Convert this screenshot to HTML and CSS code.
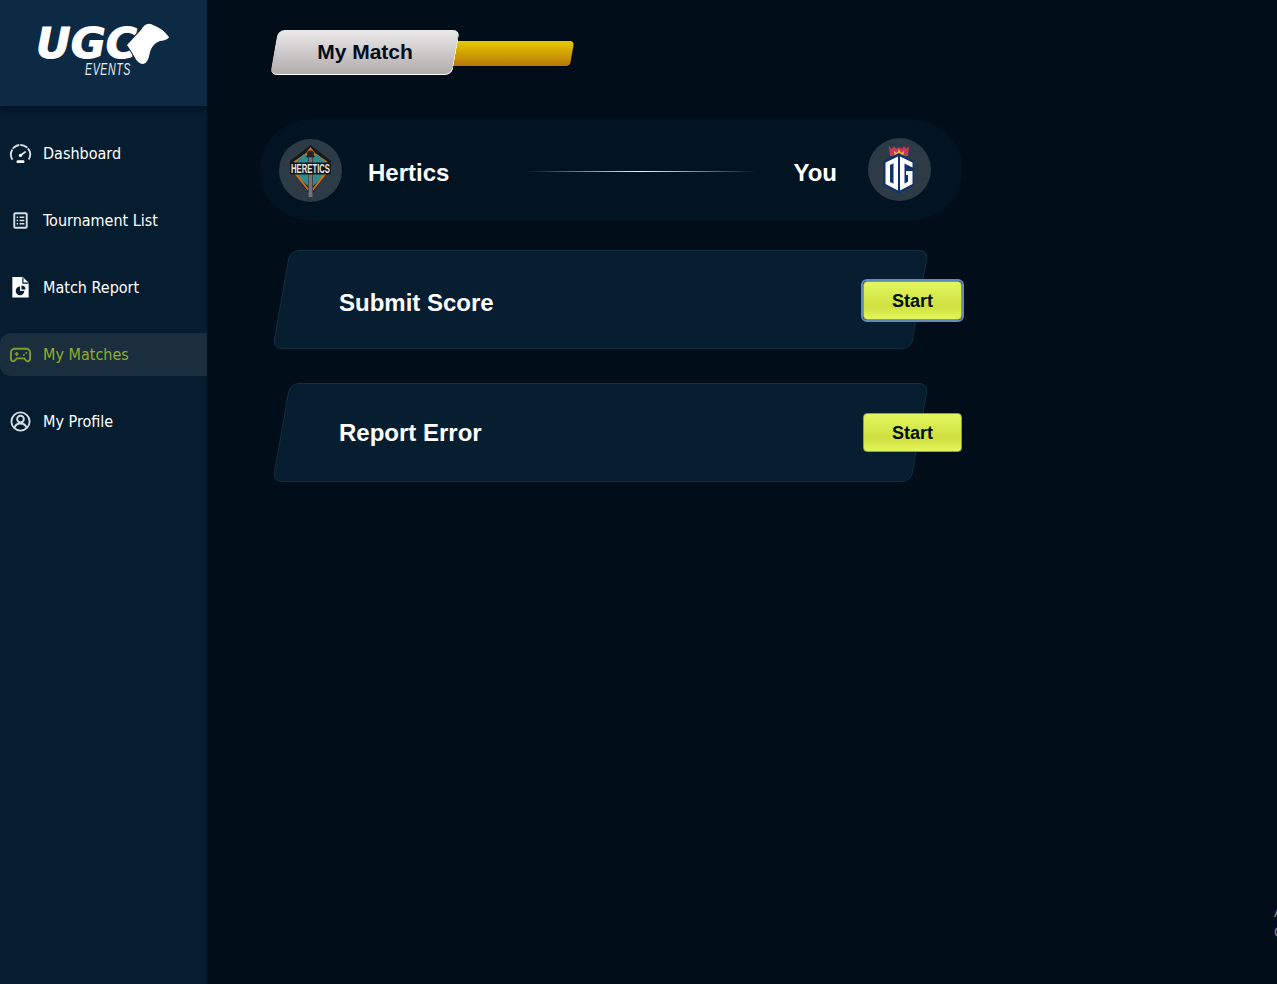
FILE: index.html
```html
<!DOCTYPE html>
<html lang="en">
<head>
<meta charset="utf-8">
<title>My Match</title>
<link rel="stylesheet" href="styles.css">
</head>
<body>
<div class="app">
  <aside class="sidebar">
    <div class="brand">
      <svg class="brand-logo" viewBox="0 0 207 106" width="207" height="106" role="img" aria-label="UGC Events">
        <text class="logo-main" x="36" y="58" textLength="101" lengthAdjust="spacingAndGlyphs">UGC</text>
        <path class="logo-pad" d="M127 45 L141 30 Q146 21 153 25 Q162 28 169 37 Q168 40 160 41 Q152 44 150 52 Q148 64 143 64 Q138 64 134 56 Q130 49 127 45Z"/>
        <text class="logo-sub" transform="translate(85 74.500) scale(0.62 1)">EVENTS</text>
      </svg>
    </div>
    <nav class="menu">
      <a class="menu-item">
        <svg class="menu-icon" viewBox="0 0 24 24"><path class="ic-line" stroke-dasharray="11 1 8 1 8 1 12" d="M3.600 18.500A10 10 0 1 1 20.400 18.500"/><path class="ic-line" d="M12.500 13.500l5-3.500"/><circle class="ic-fill" cx="12" cy="14" r="1.700"/><rect class="ic-fill" x="8" y="19" width="8" height="3" rx="1"/></svg>
        <span>Dashboard</span>
      </a>
      <a class="menu-item">
        <svg class="menu-icon" viewBox="0 0 24 24"><rect class="ic-line" x="5.500" y="4.500" width="13" height="15" rx="1"/><path class="ic-thin" d="M8 8.500h1.500M11 8.500h5M8 12h1.500M11 12h5M8 15.500h1.500M11 15.500h5"/></svg>
        <span>Tournament List</span>
      </a>
      <a class="menu-item">
        <svg class="menu-icon" viewBox="0 0 24 24"><path class="ic-fill" d="M3.500 1h11l6 6V22.500H3.500z"/><path class="ic-cut" d="M14.500 1.500V7.500h6"/><circle class="ic-cut-fill" cx="11.500" cy="15.500" r="4.500"/><path class="ic-fill" d="M11.500 15.500V10.500h5V15.500z"/><path class="ic-cut-fill" d="M13 14V9.800a4.200 4.200 0 0 1 4.200 4.200z"/></svg>
        <span>Match Report</span>
      </a>
      <a class="menu-item is-active">
        <svg class="menu-icon" viewBox="0 0 24 24"><path class="ic-line" d="M6 6h12a4 4 0 0 1 4 4v6.500a2.500 2.500 0 0 1-4.500 1.500L16 16H8l-1.500 2A2.500 2.500 0 0 1 2 16.500V10a4 4 0 0 1 4-4z"/><path class="ic-thin" d="M6 11.500h4M8 9.500v4"/><circle class="ic-dot" cx="15.500" cy="12.500" r="1"/><circle class="ic-dot" cx="18" cy="10.500" r="1"/></svg>
        <span>My Matches</span>
      </a>
      <a class="menu-item">
        <svg class="menu-icon" viewBox="0 0 24 24"><circle class="ic-line" cx="12" cy="12" r="9.500"/><circle class="ic-line" cx="12" cy="9.500" r="3.500"/><path class="ic-line" d="M5.500 19c1-3.500 3.500-5 6.500-5s5.500 1.500 6.500 5"/></svg>
        <span>My Profile</span>
      </a>
    </nav>
  </aside>

  <main class="content">
    <header class="title-tab">
      <h1 class="title-label">My Match</h1>
      <div class="title-bar"></div>
    </header>

    <section class="versus">
      <div class="team">
        <div class="badge">
          <svg viewBox="0 0 63 63" width="63" height="63" role="img" aria-label="Heretics">
            <path d="M31.500 6 L52 22 L50 31 L33 55 L30 55 L13 31 L11 22Z" fill="#15191c"/>
            <path d="M31.500 8 L36 14 L49 23 L46 24 L31.500 14 L17 24 L14 23 L27 14Z" fill="#cf6f1c"/>
            <path d="M25 15 L29 19 L29 24 L16 24Z M38 15 L34 19 L34 24 L47 24Z" fill="#2e8b8e"/>
            <path d="M16 35 L29 35 L29 47Z M47 35 L34 35 L34 47Z" fill="#2e8b8e"/>
            <path d="M14 33 L29 52 L29 49 L17 33Z M49 33 L34 52 L34 49 L46 33Z" fill="#cf6f1c"/>
            <rect x="29.500" y="13" width="4" height="45" rx="1" fill="#70757a"/>
            <circle cx="31.500" cy="15" r="3.500" fill="#22262a"/>
            <rect x="11" y="23.500" width="41" height="12" rx="1" fill="#15181b"/>
            <text class="badge-word" x="31.500" y="34" textLength="39" lengthAdjust="spacingAndGlyphs">HERETICS</text>
          </svg>
        </div>
        <span class="team-name team-name--left">Hertics</span>
      </div>
      <div class="versus-line"></div>
      <div class="team">
        <span class="team-name team-name--right">You</span>
        <div class="badge badge--raised">
          <svg viewBox="0 0 63 63" width="63" height="63" role="img" aria-label="OG">
            <path d="M21 8 L24 11 L26 8 L28 11 L31 9 L34 11 L36 8 L38 11 L41 8 L40 18 L22 18Z" fill="#c63a5c"/>
            <path d="M26 13 L29 15 L31 11 L33 15 L36 13 L35 19 L27 19Z" fill="#f5b91c"/>
            <path d="M31 15 L46 23 V47 L31 55.500 L15 47 V23Z" fill="#10316c"/>
            <path d="M17.500 24.500 L30 18.500 V52.500 L17.500 46Z" fill="#ffffff"/>
            <path d="M22 27 L25.500 25.200 V45.800 L22 44Z" fill="#10316c"/>
            <path d="M32 18.500 L44.500 24.500 V29.500 L36.500 25.500 V45.500 L40 43.800 V37 L38 37 V33 L44.500 33 V46 L32 52.500Z" fill="#ffffff"/>
          </svg>
        </div>
      </div>
    </section>

    <section class="tasks">
      <article class="task">
        <h2 class="task-title task-title--low">Submit Score</h2>
        <button class="task-btn task-btn--focus" type="button">Start</button>
      </article>
      <article class="task">
        <h2 class="task-title">Report Error</h2>
        <button class="task-btn" type="button">Start</button>
      </article>
    </section>
  </main>
</div>
<div class="edge-text">A<br>C</div>
</body>
</html>
```

FILE: styles.css
```css
* { box-sizing: border-box; }

html, body {
  margin: 0;
  height: 100%;
  overflow: hidden;
  background: #010e1a;
}

body { font-family: "Liberation Sans", Arial, sans-serif; color: #fff; }

.app { display: flex; height: 984px; }

/* Sidebar */
.sidebar {
  width: 207px;
  flex: none;
  background: #061c2f;
}

.brand {
  height: 106px;
  background: #0c2a43;
  box-shadow: 0 4px 5px rgba(1, 14, 26, 0.45);
  position: relative;
}

.brand-logo { display: block; }

.logo-main {
  font-family: "DejaVu Sans", sans-serif;
  font-size: 42px;
  font-weight: 700;
  font-style: italic;
  fill: #fff;
  stroke: #fff;
  stroke-width: 1;
}

.logo-pad { fill: #fff; stroke: #0c2a43; stroke-width: 2; paint-order: stroke; }

.logo-sub {
  font-family: "Liberation Sans", Arial, sans-serif;
  font-size: 17px;
  font-style: italic;
  letter-spacing: 1px;
  fill: #e9eef2;
}

.menu {
  display: flex;
  flex-direction: column;
  gap: 24px;
  padding-top: 26px;
}

.menu-item {
  display: flex;
  align-items: center;
  gap: 11px;
  height: 43px;
  padding-left: 9px;
  font-family: "DejaVu Sans", sans-serif;
  font-stretch: condensed;
  font-size: 16px;
  color: #fff;
  border-radius: 10px 0 0 10px;
}

.menu-icon { width: 23px; height: 23px; flex: none; color: #d5dde3; }

.ic-line, .ic-thin { fill: none; stroke: currentColor; }
.ic-line { stroke-width: 2; }
.ic-thin { stroke-width: 1.6; }
.ic-fill { fill: #fff; }
.ic-dot { fill: currentColor; }
.ic-cut { fill: none; stroke: #061c2f; stroke-width: 1.2; }
.ic-cut-fill { fill: #061c2f; }

.is-active { background: #1b2e3e; color: #8fae2c; }
.is-active .menu-icon { color: #7f9c2c; }

/* Main */
.content { flex: 1; padding: 30px 0 0 53px; }

.title-tab { display: flex; align-items: center; margin-left: 11px; height: 45px; }

.title-label {
  position: relative;
  z-index: 1;
  width: 188px;
  height: 45px;
  margin: 0;
  padding-bottom: 2px;
  display: flex;
  align-items: center;
  justify-content: center;
  font-size: 21px;
  font-weight: 700;
  color: #010e1a;
}

.title-label::before {
  content: "";
  position: absolute;
  inset: 0 3px;
  z-index: -1;
  transform: skewX(-10deg);
  border-radius: 7px;
  background: linear-gradient(#ebe9ea, #b3abab);
  border-right: 1px solid #fff;
  border-bottom: 1px solid #fff;
}

.title-bar {
  width: 124px;
  height: 25px;
  margin-left: -11px;
  margin-top: 2px;
  transform: skewX(-10deg);
  border-radius: 4px;
  background: linear-gradient(#e8cb00, #b87808);
}

.versus {
  display: flex;
  align-items: center;
  justify-content: space-between;
  width: 702px;
  height: 100px;
  margin-top: 45px;
  padding: 0 31px 0 19px;
  background: #021422;
  border-radius: 50px;
  box-shadow: 0 0 0 1px #02101b;
}

.team { display: flex; align-items: center; }

.badge {
  width: 63px;
  height: 63px;
  border-radius: 50%;
  background: #2c3b46;
  flex: none;
}

.badge--raised { position: relative; top: -1px; }

.badge svg { display: block; }

.badge-word {
  font-family: "Liberation Sans", Arial, sans-serif;
  font-size: 13px;
  font-weight: 700;
  fill: #e6e6e6;
  text-anchor: middle;
}

.team-name { font-size: 24px; font-weight: 700; line-height: 1; position: relative; top: 3px; }
.team-name--left { margin-left: 26px; }
.team-name--right { margin-right: 31px; }

.versus-line {
  width: 230px;
  height: 1px;
  margin: 2px 37px 0 78px;
  background: linear-gradient(90deg, rgba(255,255,255,0), #f2f5f5 50%, rgba(255,255,255,0));
}

.tasks {
  display: flex;
  flex-direction: column;
  gap: 34px;
  margin-top: 30px;
  margin-left: 14px;
}

.task {
  position: relative;
  z-index: 0;
  display: flex;
  align-items: center;
  justify-content: space-between;
  width: 688px;
  height: 99px;
  padding-left: 65px;
}

.task::before {
  content: "";
  position: absolute;
  top: 0;
  bottom: 0;
  left: 7px;
  width: 637px;
  z-index: -1;
  transform: skewX(-10deg);
  border-radius: 9px;
  background: #061e30;
  border: 1px solid #10303f;
}

.task-title { margin: 0; font-size: 24px; font-weight: 700; line-height: 1; }
.task-title--low { position: relative; top: 3px; }

.task-btn {
  width: 99px;
  height: 39px;
  padding: 2px 0 0;
  font-family: "Liberation Sans", Arial, sans-serif;
  font-size: 18px;
  font-weight: 700;
  color: #020f1a;
  border: 1px solid #8b9480;
  border-radius: 4px;
  background: linear-gradient(#e2f75e, #cfe040 65%, #e3f65a);
}

.task-btn--focus {
  position: relative;
  top: 1px;
  outline: 2px solid #5f8abb;
  outline-offset: 0;
}

.edge-text {
  position: absolute;
  left: 1274px;
  top: 902px;
  font-size: 14px;
  line-height: 20px;
  color: #7d8a94;
}
```
